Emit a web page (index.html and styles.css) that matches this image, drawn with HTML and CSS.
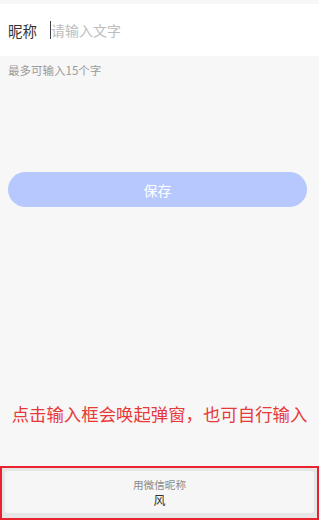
FILE: index.html
```html
<!DOCTYPE html>
<html>
<head>
  <meta charset="utf-8">
  <title>修改昵称</title>
  <link rel="stylesheet" href="styles.css">
</head>
<body>
  <div class="page">
    <div class="field-row">
      <span class="field-label">昵称</span>
      <span class="field-input"><span class="caret"></span><span class="placeholder">请输入文字</span></span>
    </div>
    <p class="hint">最多可输入15个字</p>

    <button class="save-btn">保存</button>

    <p class="note">点击输入框会唤起弹窗，也可自行输入</p>

    <div class="picker">
      <div class="picker-card">
        <span class="picker-title">用微信昵称</span>
        <span class="picker-name">风</span>
      </div>
    </div>
  </div>
</body>
</html>
```

FILE: styles.css
```css
* {
  box-sizing: border-box;
}

body {
  margin: 0;
  background: #f7f7f7;
  font-family: "Noto Sans CJK SC", "Noto Sans", sans-serif;
}

.page {
  height: 520px;
  padding-top: 4px; /* thin grey strip above the input row */
  display: flex;
  flex-direction: column;
}

.field-row {
  height: 52px;
  background: #fff;
  display: flex;
  align-items: center;
  padding-left: 8px;
}

.field-label {
  font-size: 14.5px;
  color: #333;
  width: 42px;
}

.field-input {
  display: flex;
  align-items: center;
}

.caret {
  width: 1px;
  height: 18px;
  background: #444;
}

.placeholder {
  font-size: 14px;
  color: #bdbdbd;
}

.hint {
  margin: 6px 0 0 8px;
  font-size: 11.5px;
  color: #9a9a9a;
  line-height: 16px;
}

.save-btn {
  margin: 94px 12px 0 8px;
  height: 35px;
  border: none;
  border-radius: 18px;
  background: #b6c8fd;
  color: #fff;
  font-family: inherit;
  font-size: 14px;
}

.note {
  margin: 195px 0 0;
  text-align: center;
  font-size: 17.4px;
  line-height: 24px;
  color: #e8393a;
}

.picker {
  margin-top: auto;
  height: 54px;
  border: 2px solid #e8222e;
  background: #e6e6e6;
  padding: 3px 3px 5px;
}

.picker-card {
  height: 100%;
  background: #f6f6f6;
  border-radius: 3px;
  display: flex;
  flex-direction: column;
  align-items: center;
  justify-content: center;
}

.picker-title {
  font-size: 10.6px;
  color: #8a8a8a;
  line-height: 15px;
}

.picker-name {
  font-size: 12px;
  color: #333;
  line-height: 16px;
}
```
